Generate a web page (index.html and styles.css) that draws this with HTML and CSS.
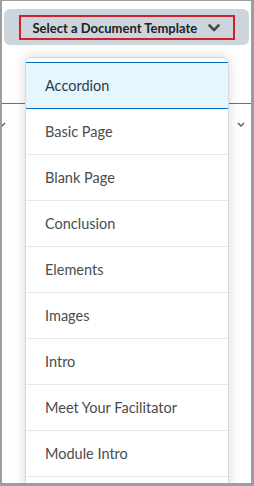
FILE: index.html
```html
<!DOCTYPE html>
<html lang="en">
<head>
    <meta charset="UTF-8">
    <meta name="viewport" content="width=device-width, initial-scale=1.0">
    <title>Select a Document Template</title>
    <link rel="stylesheet" href="styles.css">
</head>
<body>

    <div class="frame">
        <div class="toolbar">
            <div class="template-button">
                <span>Select a Document Template</span>
                <svg class="chevron" width="12" height="8" viewBox="0 0 12 8">
                    <path d="M1.5 1.5 L6 6 L10.5 1.5" fill="none" stroke="#494c4e" stroke-width="2.6" stroke-linecap="round" stroke-linejoin="round"/>
                </svg>
            </div>
        </div>

        <!-- field that sits behind the open menu -->
        <div class="field">
            <svg class="small-chevron left" width="8" height="5" viewBox="0 0 8 5">
                <path d="M1 1 L4 4 L7 1" fill="none" stroke="#565a5c" stroke-width="1.4"/>
            </svg>
            <svg class="small-chevron" width="8" height="5" viewBox="0 0 8 5">
                <path d="M1 1 L4 4 L7 1" fill="none" stroke="#565a5c" stroke-width="1.4"/>
            </svg>
        </div>

        <div class="menu">
            <div class="menu-item selected">Accordion</div>
            <div class="menu-item">Basic Page</div>
            <div class="menu-item">Blank Page</div>
            <div class="menu-item">Conclusion</div>
            <div class="menu-item">Elements</div>
            <div class="menu-item">Images</div>
            <div class="menu-item">Intro</div>
            <div class="menu-item">Meet Your Facilitator</div>
            <div class="menu-item">Module Intro</div>
        </div>
    </div>

</body>
</html>
```

FILE: styles.css
```css
body {
    margin: 0;
    font-family: Lato, "Liberation Sans", sans-serif;
    background-color: #fff;
}

.frame {
    position: relative;
    width: 254px;
    height: 486px;
    box-sizing: border-box;
    border-style: solid;
    border-color: #9d9d9d;
    border-width: 1px 3px 3px 2px;
    overflow: hidden;
    background-color: #fff;
}

.toolbar {
    margin: 8px 2px 0;
    height: 36px;
    box-sizing: border-box;
    padding-top: 6px;
    background-color: #cdd5dc;
    border-radius: 6px;
    display: flex;
    justify-content: center;
    align-items: flex-start;
}

.template-button {
    width: 216px;
    height: 25px;
    box-sizing: border-box;
    border: 2px solid #d0202e;
    padding: 0 13px 0 12px;
    display: flex;
    align-items: center;
    justify-content: space-between;
    font-size: 13px;
    font-weight: 700;
    color: #202122;
}

.chevron {
    display: block;
}

.field {
    margin-top: 58px;
    height: 40px;
    border-top: 1px solid #6f6f6f;
    display: flex;
    justify-content: space-between;
    align-items: center;
    padding-right: 6px;
}

.small-chevron {
    display: block;
}

.small-chevron.left {
    margin-left: -4px;
}

.menu {
    position: absolute;
    left: 23px;
    top: 56px;
    width: 204px;
    height: 470px;
    box-sizing: border-box;
    padding-top: 4px;
    background-color: #fff;
    border: 1px solid #d6dbe2;
    border-radius: 5px;
    box-shadow: 0 0 12px rgba(0, 0, 0, 0.16);
}

.menu-item {
    height: 46px;
    box-sizing: border-box;
    padding-left: 19px;
    display: flex;
    align-items: center;
    border-bottom: 1px solid #e3e9f1;
    font-size: 14.5px;
    color: #494c4e;
}

.menu-item.selected {
    height: 47px;
    background-color: #e6f6fe;
    border-top: 1px solid #006fbf;
    border-bottom: 1px solid #006fbf;
    color: #2c3a4a;
}
```
